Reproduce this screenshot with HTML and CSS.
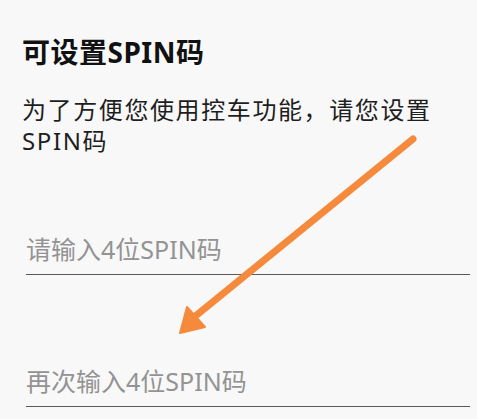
FILE: index.html
```html
<!DOCTYPE html>
<html lang="zh-CN">
<head>
<meta charset="utf-8">
<title>可设置SPIN码</title>
<link rel="stylesheet" href="styles.css">
</head>
<body>
<main class="page">
  <h1 class="title">可设置SPIN码</h1>
  <p class="desc">为了方便您使用控车功能，请您设置<br>SPIN码</p>
  <div class="fields">
    <input class="field" type="password" placeholder="请输入4位SPIN码">
    <input class="field" type="password" placeholder="再次输入4位SPIN码">
  </div>
  <svg class="arrow" width="477" height="419" viewBox="0 0 477 419" aria-hidden="true">
    <line x1="413" y1="139" x2="193" y2="318" stroke="#f58a3c" stroke-width="7" stroke-linecap="round"/>
    <polygon points="180,333 187,307 205,327" fill="#f58a3c" stroke="#f58a3c" stroke-width="2" stroke-linejoin="round"/>
  </svg>
</main>
</body>
</html>
```
FILE: styles.css
```css
html, body {
  margin: 0;
  padding: 0;
  background: #f8f8f8;
}
body {
  font-family: "Noto Sans", "Noto Sans CJK SC", sans-serif;
  width: 477px;
  height: 419px;
  overflow: hidden;
}
.page {
  position: relative;
  padding: 34px 7px 0 22px;
  display: flex;
  flex-direction: column;
}
.title {
  margin: 0;
  font-size: 28px;
  line-height: 36px;
  font-weight: 700;
  color: #111;
  letter-spacing: 0.5px;
}
.desc {
  margin: 24px 0 0;
  font-size: 24px;
  line-height: 31px;
  color: #1e1e1e;
  letter-spacing: 1.6px;
}
.fields {
  display: flex;
  flex-direction: column;
  gap: 86px;
  margin: 73px 0 0 4px;
}
.field {
  box-sizing: content-box;
  width: 444px;
  height: 40px;
  padding: 0 0 5px;
  margin: 0;
  border: none;
  border-bottom: 1.5px solid #5a5a5a;
  background: transparent;
  outline: none;
  font-family: "Noto Sans", "Noto Sans CJK SC", sans-serif;
  font-size: 25px;
  color: #222;
}
.field::placeholder {
  color: #939393;
}
.arrow {
  position: absolute;
  left: 0;
  top: 0;
  pointer-events: none;
}
```
